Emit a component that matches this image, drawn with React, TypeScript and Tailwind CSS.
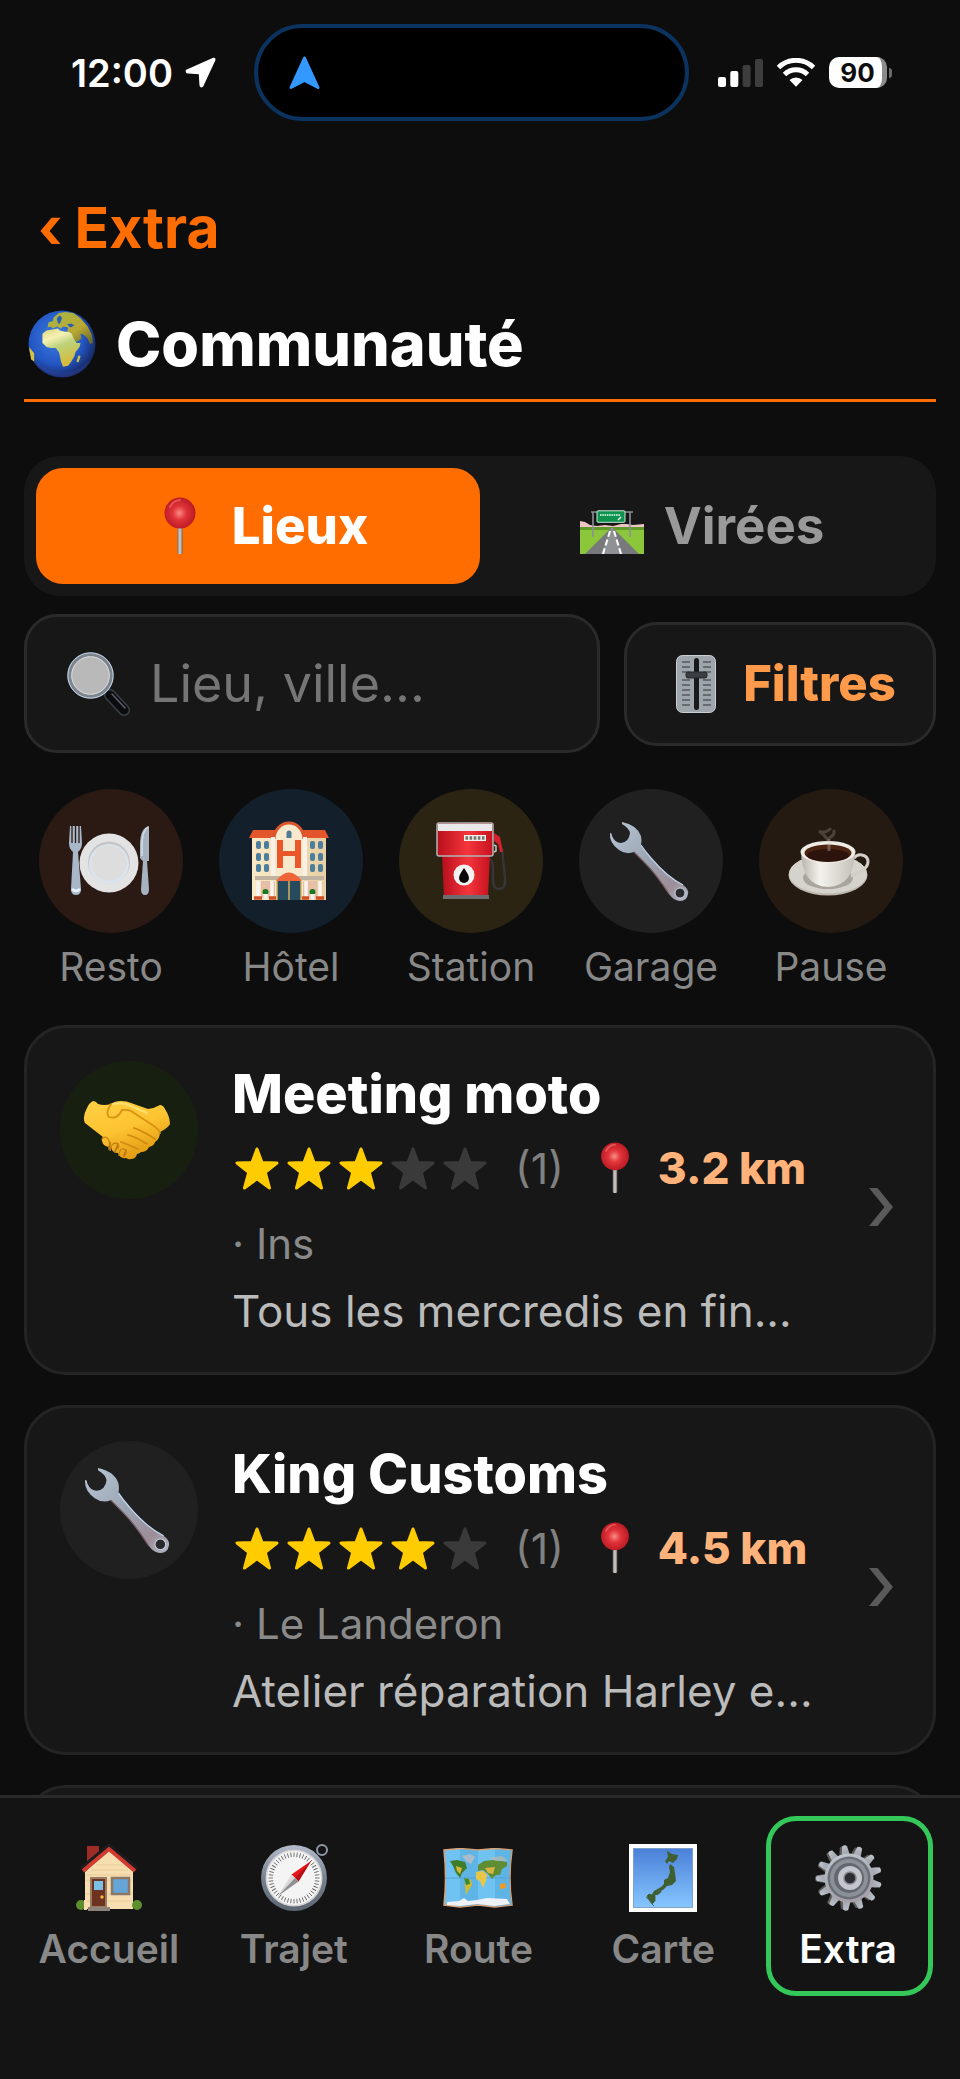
import type { ReactNode } from "react";

type IconProps = { className?: string };

function Defs() {
  return (
    <svg className="absolute size-0" aria-hidden="true">
      <defs>
        <radialGradient id="g-sea" cx="0.42" cy="0.4" r="0.62">
          <stop offset="0" stopColor="#3f7fe0" />
          <stop offset="0.65" stopColor="#2356c4" />
          <stop offset="1" stopColor="#16265f" />
        </radialGradient>
        <linearGradient id="g-land" x1="0" y1="0" x2="0.4" y2="1">
          <stop offset="0" stopColor="#d9d67a" />
          <stop offset="0.3" stopColor="#f6f1b4" />
          <stop offset="0.55" stopColor="#bcd27a" />
          <stop offset="1" stopColor="#d8bb3c" />
        </linearGradient>
        <linearGradient id="g-europe" x1="0" y1="0" x2="1" y2="1">
          <stop offset="0" stopColor="#a6b646" />
          <stop offset="0.6" stopColor="#b9a934" />
          <stop offset="1" stopColor="#5f6426" />
        </linearGradient>
        <radialGradient id="g-pin" cx="0.48" cy="0.5" r="0.55">
          <stop offset="0" stopColor="#f98b84" />
          <stop offset="0.4" stopColor="#e2343a" />
          <stop offset="1" stopColor="#b51722" />
        </radialGradient>
        <linearGradient id="g-needle" x1="0" y1="0" x2="1" y2="0">
          <stop offset="0" stopColor="#7d7876" />
          <stop offset="0.5" stopColor="#d9d5d2" />
          <stop offset="1" stopColor="#6f6a68" />
        </linearGradient>
        <linearGradient id="g-steel" x1="0" y1="0" x2="1" y2="1">
          <stop offset="0" stopColor="#b8c6d6" />
          <stop offset="0.5" stopColor="#9aa3b0" />
          <stop offset="0.8" stopColor="#9c8d97" />
          <stop offset="1" stopColor="#b3bccb" />
        </linearGradient>
        <linearGradient id="g-rim" x1="0" y1="0" x2="0" y2="1">
          <stop offset="0" stopColor="#b3bccb" />
          <stop offset="0.5" stopColor="#78818f" />
          <stop offset="1" stopColor="#5c6571" />
        </linearGradient>
        <linearGradient id="g-hand" x1="0" y1="0" x2="0.5" y2="1">
          <stop offset="0" stopColor="#ffd045" />
          <stop offset="0.55" stopColor="#fdc431" />
          <stop offset="1" stopColor="#e39c14" />
        </linearGradient>
        <linearGradient id="g-sky" x1="0" y1="0" x2="0" y2="1">
          <stop offset="0" stopColor="#4a80d8" />
          <stop offset="1" stopColor="#86c6ff" />
        </linearGradient>
        <linearGradient id="g-red" x1="0" y1="0" x2="1" y2="0">
          <stop offset="0" stopColor="#b80f1c" />
          <stop offset="0.55" stopColor="#f5353c" />
          <stop offset="1" stopColor="#c5121f" />
        </linearGradient>
        <linearGradient id="g-cup" x1="0" y1="0" x2="1" y2="0">
          <stop offset="0" stopColor="#b9b5ac" />
          <stop offset="0.35" stopColor="#f4f2ed" />
          <stop offset="1" stopColor="#c4c0b8" />
        </linearGradient>
        <linearGradient id="g-gear" x1="0" y1="0" x2="0.3" y2="1">
          <stop offset="0" stopColor="#c3cbd4" />
          <stop offset="0.6" stopColor="#a9adb5" />
          <stop offset="1" stopColor="#a79fab" />
        </linearGradient>
        <linearGradient id="g-wall" x1="0" y1="0" x2="1" y2="0">
          <stop offset="0" stopColor="#fbe9c6" />
          <stop offset="1" stopColor="#e8cfa4" />
        </linearGradient>
      </defs>
    </svg>
  );
}

function Svg({ box, className, children }: { box: string; className?: string; children: ReactNode }) {
  return (
    <svg viewBox={box} className={className} aria-hidden="true" fill="none">
      {children}
    </svg>
  );
}

function Globe({ className }: IconProps) {
  return (
    <Svg box="0 0 66 66" className={className}>
      <circle cx="33" cy="33" r="32.5" fill="url(#g-sea)" />
      <path d="M14 23l4-3 6-1 5-1 2 2 5 1 4 0 3 2 2 5 2 4 4 0-1 4-4 5-1 4-3 5-3 4-5 1-2-5-1-5-1-4-3-4-5 0-4-1-4-4 0-5z" fill="url(#g-land)" />
      <path d="M19 17l1-5 4-1 1-4 5-4 6-1 8 1 7 5 7 8 4 8 1 8-3 1-2-5-4-4-3-1 1 5-5 3-3-4-2-5-4-1 1-4-5-1-2 2-4-2-4 2-2-2-3 1z" fill="url(#g-europe)" />
      <path d="M28 8l3-3 2 3-2 5-2 0zM38 14l4-1 3 2-4 2z" fill="#2a5cb8" />
      <path d="M49 44l2 1-2 6-2-1zM1 36l5 6 0 8-3-2z" fill="#d3c140" />
      <path d="M6 46a30 30 0 0 0 56 0 34 34 0 0 1-56 0z" fill="#3a4fb0" opacity="0.25" />
    </Svg>
  );
}

function Pin({ className }: IconProps) {
  return (
    <Svg box="0 0 32 58" className={className}>
      <rect x="13.5" y="28" width="5" height="29" rx="1.5" fill="url(#g-needle)" />
      <circle cx="16" cy="16" r="15.5" fill="url(#g-pin)" />
      <path d="M6 10a12 12 0 0 1 10-7" stroke="#ef6a66" strokeWidth="2" strokeLinecap="round" opacity="0.7" />
    </Svg>
  );
}

function Road({ className }: IconProps) {
  return (
    <Svg box="0 0 64 44" className={className}>
      <path d="M0 11l5 1 5 3 7 1 8-1 8 1 8-2 6 0 6 1 11-1v6H0z" fill="#ecc5c4" />
      <rect y="17" width="64" height="27" fill="#8cc63a" />
      <rect y="17" width="64" height="3" fill="#5f9a2b" />
      <path d="M31 18h2l26 26H5z" fill="#77797c" />
      <path d="M31 18h2l10 26H21z" fill="#8f9194" />
      <path d="M30 21L23 44M34 21l7 23" stroke="#fff" strokeWidth="2" strokeDasharray="6 3" />
      <path d="M13 2v25M50 2v25M11 2h42" stroke="#8b9096" strokeWidth="1.6" />
      <rect x="17" y="0.8" width="28" height="11.5" rx="1" fill="#0e9250" stroke="#cfe8d8" strokeWidth="1" />
      <path d="M20 5h20" stroke="#bfe6cf" strokeWidth="2" strokeDasharray="1.5 0.8" />
      <path d="M38 10l3-3" stroke="#fff" strokeWidth="1.2" />
    </Svg>
  );
}

function Magnifier({ className }: IconProps) {
  return (
    <Svg box="0 0 64 64" className={className}>
      <path d="M38 38l6 6" stroke="#7f868d" strokeWidth="5" />
      <path d="M43 43l14 15" stroke="#3a4047" strokeWidth="12" strokeLinecap="round" />
      <path d="M43 43l14 15" stroke="#0b0c0f" strokeWidth="9" strokeLinecap="round" />
      <path d="M45 42l13 14" stroke="#5a6067" strokeWidth="1.6" strokeLinecap="round" />
      <circle cx="23.500" cy="23.500" r="21" fill="#b9b9b9" stroke="#7d858f" strokeWidth="4" />
      <circle cx="23.500" cy="23.500" r="22.700" stroke="#c9dcf0" strokeWidth="1" />
      <circle cx="23.500" cy="23.500" r="18.800" stroke="#dcdcdc" strokeWidth="1" />
    </Svg>
  );
}

function Fader({ className }: IconProps) {
  const marks = [7, 12, 17, 25, 30, 35, 40, 45, 50];
  return (
    <Svg box="0 0 40 58" className={className}>
      <rect x="0.5" y="0.5" width="39" height="57" rx="6" fill="#9fa6ab" stroke="#c9cfd3" />
      {marks.map((y) => (
        <path key={y} d={`M6 ${y}h8M27 ${y}h8`} stroke="#54595e" strokeWidth="1.500" />
      ))}
      <rect x="18" y="3" width="5" height="52" rx="2.500" fill="#17191b" />
      <rect x="10" y="17" width="21" height="6" rx="2" fill="#3b3f44" stroke="#24272a" />
    </Svg>
  );
}

function Plate({ className }: IconProps) {
  return (
    <Svg box="0 0 80 80" className={className}>
      <circle cx="40" cy="42" r="29.500" fill="#e3e3e4" />
      <circle cx="40" cy="41.500" r="21" fill="#c4c6ca" />
      <circle cx="40" cy="43" r="20" fill="#dbe3ec" />
      <circle cx="40" cy="42" r="17.500" fill="#dddddd" />
      <path d="M1 5l-1 17q0 6 4 9L2 68q0 6 5 6t5-6L9 31q4-3 4-9L12 5" fill="#a9b8c8" />
      <path d="M3 5v17M6.500 5v17M10 5v17" stroke="#2a1a14" strokeWidth="1.300" />
      <path d="M3 68q4 4 8 0" stroke="#e6f1fb" strokeWidth="3" />
      <path d="M80 5q-9 2-9 19v13q2 3 3 3l-2 28q0 6 4 6t4-6L78 40h2z" fill="#a6b3c0" />
      <path d="M79 6q-6 4-6 18v11" stroke="#d5dfe8" strokeWidth="1.500" />
    </Svg>
  );
}

function Hotel({ className }: IconProps) {
  const rows = [20, 32, 43];
  return (
    <Svg box="0 0 80 80" className={className}>
      <rect x="3" y="14" width="74" height="65" fill="url(#g-wall)" />
      <path d="M4 9h72l4 8H0z" fill="#e3562c" />
      <path d="M25 17a15 16 0 0 1 30 0v62H25z" fill="#f8e8cc" />
      <path d="M25 18a15 16 0 0 1 30 0" stroke="#db542c" strokeWidth="3" />
      <path d="M24 16v39M56 16v39" stroke="#f7f1ea" strokeWidth="4" />
      <path d="M28 19h6v11h12V19h6v28h-6V35H34v12h-6z" fill="#e9572b" />
      <path d="M37.500 17v-5a2.500 2.500 0 0 1 5 0v5z" fill="#4c7993" />
      {rows.map((y) => (
        <g key={y} fill="#4b7e9c">
          <rect x="7" y={y} width="5" height="8" rx="2" />
          <rect x="15" y={y} width="5" height="8" rx="2" />
          <rect x="61" y={y} width="5" height="8" rx="2" />
          <rect x="69" y={y} width="5" height="8" rx="2" />
        </g>
      ))}
      <rect x="6" y="55" width="69" height="4" fill="#c0b39f" />
      <rect x="12" y="60" width="14" height="17" fill="#e6bfa6" />
      <rect x="54" y="60" width="14" height="17" fill="#e6bfa6" />
      <path d="M9 60v17M23 60v17M57 60v17M71 60v17" stroke="#f8f4ef" strokeWidth="3.500" />
      <rect x="28" y="60" width="24" height="19" fill="#264a5e" />
      <path d="M28 60v19M40 60v19M52 60v19" stroke="#d4b25f" strokeWidth="1.500" />
      <path d="M27 60q13-17 26 0z" fill="#f0643a" />
      <path d="M5 77h8M20 77h7M53 77h7M67 77h8" stroke="#cf5024" strokeWidth="3.500" />
      <circle cx="16.500" cy="71" r="3" fill="#167a1f" />
      <circle cx="63.500" cy="71" r="3" fill="#167a1f" />
      <path d="M14 73h5l-1 6h-3zM61 73h5l-1 6h-3z" fill="#f2efe9" />
    </Svg>
  );
}

function Pump({ className }: IconProps) {
  return (
    <Svg box="0 0 80 80" className={className}>
      <path d="M60 38q4 1 4 10v11q0 9 6 9 7 0 6-11L73 27" stroke="#35353a" strokeWidth="2.500" />
      <path d="M65 12l6 4 3 15h-3l-2-8-4-3z" fill="#d3202c" />
      <path d="M65 24l2 1v5l-2 1" stroke="#c9c9cb" strokeWidth="1.500" />
      <path d="M13 33h48l-2 43H15z" fill="url(#g-red)" />
      <rect x="8" y="2" width="56" height="33" rx="2" fill="url(#g-red)" stroke="#b4b4b6" strokeWidth="1.500" />
      <path d="M9 3h54v7H9z" fill="#e9e9ea" />
      <rect x="35" y="14" width="22" height="6" fill="#f1efe9" />
      <path d="M36.500 17h19" stroke="#77736d" strokeWidth="3.500" strokeDasharray="2.600 1.500" />
      <rect x="14" y="74" width="46" height="4" fill="#6e6e70" />
      <circle cx="35" cy="54" r="10.500" fill="#f4f2f0" />
      <path d="M35 47q-5 7-5 10a5 5 0 0 0 10 0q0-3-5-10z" fill="#080808" />
    </Svg>
  );
}

function Wrench({ className }: IconProps) {
  return (
    <Svg box="0 0 80 80" className={className}>
      <path
        d="M13 1q15 3 19 14 1 5 0 9 4 6 10 13 16 19 32 27 6 4 5 9-1 7-8 7-6 0-11-7Q48 54 36 42l-11-11q-8 3-15-2Q0 22 1 12q2 0 2 3 3 7 9 7 8-1 9-10Q20 7 13 3z"
        fill="url(#g-steel)"
      />
      <path d="M32 24q4 6 10 13 16 19 32 27" stroke="#bfd5ee" strokeWidth="1.200" />
      <path d="M25 31l11 11q12 12 24 31" stroke="#7b5c66" strokeWidth="1.200" />
      <circle cx="71" cy="72" r="5" fill="#2a2a2d" stroke="#cdd7e3" strokeWidth="1" />
    </Svg>
  );
}

function Coffee({ className }: IconProps) {
  return (
    <Svg box="0 0 82 72" className={className}>
      <ellipse cx="40" cy="50" rx="39.500" ry="20.500" fill="#bcb8b0" />
      <ellipse cx="40" cy="49" rx="39" ry="19.500" fill="#d6d3cc" />
      <ellipse cx="40" cy="53" rx="25" ry="11" fill="#a9a59c" />
      <path d="M66 33q3-4 8-3 6 1 6 7-1 9-17 14" stroke="#d3cfc8" strokeWidth="3" />
      <path d="M13 25q0 36 27 37 27-1 27-37z" fill="url(#g-cup)" />
      <ellipse cx="40" cy="27" rx="27.500" ry="11" fill="#efece5" />
      <ellipse cx="40" cy="28" rx="23.500" ry="8.500" fill="#4a2410" />
      <ellipse cx="40" cy="30.500" rx="21" ry="6.500" fill="#2c130b" />
      <path d="M41 26V14" stroke="#cfc5bc" strokeWidth="3" opacity="0.350" />
      <path d="M40 15q-3-5-9-9 6 3 11-2M41 13q6-3 5-7" stroke="#9b9088" strokeWidth="3" strokeLinecap="round" opacity="0.350" />
    </Svg>
  );
}

function Handshake({ className }: IconProps) {
  return (
    <Svg box="0 0 88 60" className={className}>
      <path
        d="M10 1q3 0 5 3 6 2 13 0 4-3 10-3 6 0 10 2l17 6q7-1 12-4 3 0 5 4 5 8 5 15-2 4-10 8 0 7-5 10-1 4-6 5-2 5-8 5-2 2-4 2-1 5-6 5-2 1-5-1-6 1-8-5-6 0-7-6-8 0-9-6-1-3 1-4L2 23Q-1 17 4 8q2-5 6-7z"
        fill="url(#g-hand)"
      />
      <path d="M28 4q-6 9-2 13 8 3 13-7 8-1 12 3l20 13q6 5 6 7" stroke="#d99312" strokeWidth="1.800" strokeLinecap="round" />
      <path d="M51 28q9 3 21 11M45 35q8 2 19 9M38 42q8 3 17 7" stroke="#d08a10" strokeWidth="1.800" strokeLinecap="round" />
      <path d="M27 43l-1 6M35 44l-3 8M43 50l-2 6" stroke="#b9770f" strokeWidth="1.800" strokeLinecap="round" />
      <path d="M19 39q5-5 8 4M27 51q1-8 6-8 4 1 2 6M36 56q0-8 5-7 4 2 1 6" stroke="#c78310" strokeWidth="1.300" />
      <path d="M30 4q10-2 18 2l16 7" stroke="#ffdf70" strokeWidth="2" strokeLinecap="round" />
    </Svg>
  );
}

function House({ className }: IconProps) {
  return (
    <Svg box="0 0 68 68" className={className}>
      <rect x="12" y="2" width="12" height="20" fill="#9d2b26" />
      <path d="M34 4L10 28v37h48V27z" fill="#f6deb0" />
      <path d="M11 36h46M11 31h46M16 26h37M21 21h27M11 50h46M11 57h46" stroke="#e6c893" strokeWidth="0.800" />
      <path d="M6 24L34 1l28 23" stroke="#1c1c1e" strokeWidth="3" strokeLinejoin="round" />
      <path d="M8 27L34 5l26 22" stroke="#d13a2f" strokeWidth="4" />
      <rect x="16" y="34" width="15" height="29" fill="#6e3320" stroke="#9b7a62" strokeWidth="2" />
      <rect x="19" y="37" width="9" height="9" fill="#79bfe6" />
      <circle cx="27" cy="53" r="1.700" fill="#f3bd3c" />
      <rect x="37" y="34" width="17" height="16" fill="#66a5d8" stroke="#8b7866" strokeWidth="2.500" />
      <rect x="13" y="63" width="22" height="4" fill="#8c847b" />
      <circle cx="6" cy="61" r="5" fill="#5d8f2f" />
      <circle cx="62" cy="61" r="5" fill="#5d8f2f" />
      <rect x="9" y="56" width="3" height="10" fill="#f6deb0" />
    </Svg>
  );
}

function Compass({ className }: IconProps) {
  const ticks = Array.from({ length: 48 }, (_, i) => i * 7.5);
  return (
    <Svg box="0 0 68 68" className={className}>
      <circle cx="62" cy="6" r="5" stroke="#8d97a6" strokeWidth="2" />
      <circle cx="34" cy="34" r="33" fill="url(#g-rim)" />
      <circle cx="34" cy="34" r="28.500" fill="#d5d5d6" />
      <circle cx="34" cy="34" r="27" fill="#f4f4f4" />
      {ticks.map((a) => (
        <path key={a} d="M34 8.500v4.500" stroke="#6a6a6c" strokeWidth="0.900" transform={`rotate(${a} 34 34)`} />
      ))}
      <path d="M51 17L38.500 37.500 31.500 30.500z" fill="#e8151b" />
      <path d="M51 17L38.500 37.500 35 34z" fill="#b70f14" />
      <path d="M18 52L31.500 30.500 38.500 37.500z" fill="#d9d9da" />
      <path d="M18 52L35 34 38.500 37.500z" fill="#8f9192" />
    </Svg>
  );
}

function WorldMap({ className }: IconProps) {
  return (
    <Svg box="0 0 70 60" className={className}>
      <path d="M1 2l16-1.500 18 1.500 17-1.500L69 2q-4 28 0 55l-17 2-17-2-18 2L1 57q3-27 0-55z" fill="#6fc3f2" stroke="#d9a377" strokeWidth="1.500" />
      <path d="M17 1l18 1v55l-18 2zM52 1l17 1q-4 28 0 55l-17 2z" fill="#2f86c2" opacity="0.250" />
      <path d="M2 30h65" stroke="#4f9fce" strokeWidth="0.800" />
      <path d="M4 54l12-1 5-3 4 3 9-1 10-2 20 1 3 5-15 2-17-2-18 2-13-1z" fill="#eef2f6" />
      <path d="M7 13l7-1 8 2 2 6-5 5-2 5-4-5-3-7z" fill="#3f7d2a" />
      <path d="M13 18l6 2-2 6-3-3z" fill="#d8b63c" />
      <path d="M19 8l8-2 5 3-4 7-4-2z" fill="#a9bccb" />
      <path d="M22 30l6 2 1 5-4 6-2 4-1-9z" fill="#d2bb2c" />
      <path d="M21 30l5 1 1 5-4 1z" fill="#3f8a2c" />
      <path d="M33 24l7-1 4 4-1 6-3 7-3-7-4-2z" fill="#e8c648" />
      <path d="M35 17l6-4 10-1 13 2 0 4-5 3-2 6-4 0-4 4-4-5-5-4-5 1z" fill="#5f8d33" />
      <path d="M42 20l10-1-2 7-5-1z" fill="#d7b540" />
      <path d="M57 36l5-1 1 5-6 1z" fill="#f09a22" />
      <path d="M45 10l14-2 6 5-12 0z" fill="#b9bcae" opacity="0.700" />
    </Svg>
  );
}

function JapanMap({ className }: IconProps) {
  return (
    <Svg box="0 0 68 68" className={className}>
      <rect width="68" height="68" fill="#fdfdfd" />
      <rect x="4.500" y="4.500" width="59" height="59" fill="url(#g-sky)" stroke="#7095bd" strokeWidth="0.800" />
      <path d="M38 7l5 3 6 1-1 4-4 4-4-2-2 3-2-3 3-4z" fill="#3f5f33" />
      <path d="M41 20l4 3 1 6 1 8-4 4-5 1-4 4-5 1-3 5-4 0 3-5 7-4 3-3 0-4 4-2 2-6-1-5z" fill="#3f5f33" />
      <path d="M26 49l6-3 0 2-4 3zM20 50l6 2 0 5-3 3-3-4-2-4zM17 53l2 2M23 60l2 2" fill="#3f5f33" stroke="#3f5f33" strokeWidth="0.800" />
    </Svg>
  );
}

function Gear({ className }: IconProps) {
  const teeth = Array.from({ length: 13 }, (_, i) => i * (360 / 13) - 8);
  return (
    <Svg box="0 0 68 68" className={className}>
      {teeth.map((a) => (
        <path key={a} d="M28 14L30 3q3-2 6 0L38 14z" fill="#5d5a58" transform={`rotate(${a} 33 34)`} />
      ))}
      {teeth.map((a) => (
        <path key={a} d="M30.500 14L32.500 2q2.500-2 5 0L39.500 14z" fill="url(#g-gear)" transform={`rotate(${a} 35 34)`} />
      ))}
      <circle cx="35" cy="34" r="24.500" fill="url(#g-gear)" />
      <circle cx="35" cy="34" r="21.500" fill="#6b7078" />
      <circle cx="35" cy="34" r="19" fill="#8c9198" />
      <circle cx="35" cy="34" r="15" fill="#63676e" />
      <circle cx="36" cy="34" r="12" fill="#c3c6cc" />
      <circle cx="36" cy="34" r="6" fill="#2c2e31" stroke="#83878d" strokeWidth="1.500" />
    </Svg>
  );
}

function Star({ on }: { on: boolean }) {
  return (
    <svg viewBox="0 0 44 43" className="h-[43px] w-[44px]" aria-hidden="true">
      <path
        d="M22 2L27 15.500 42 16 30.300 25.300 34.500 41 22 31.800 9.500 41 13.700 25.300 2 16 17 15.500z"
        fill={on ? "#ffcc00" : "#3a3a3a"}
        stroke={on ? "#ffcc00" : "#3a3a3a"}
        strokeWidth="3"
        strokeLinejoin="round"
      />
    </svg>
  );
}

function StatusBar() {
  return (
    <div className="flex shrink-0 items-center pt-6 pr-[26px]">
      <div className="flex flex-1 items-center justify-end gap-3 pr-[38px]">
        <span className="text-[38px] leading-none font-semibold">12:00</span>
        <Svg box="0 0 31 31" className="size-[31px]">
          <path d="M28.500 1.500L1.500 13.500Q1 15.500 3 15.800L14.500 16.500 15.200 28Q15.700 30.500 17.500 29.200L29.700 3Q30 1 28.500 1.500z" fill="#fff" stroke="#fff" strokeWidth="1.500" strokeLinejoin="round" />
        </Svg>
      </div>
      <div className="flex h-[97px] w-[435px] items-center rounded-full border-4 border-[#0a335f] bg-black pl-[31px]">
        <Svg box="0 0 31 34" className="h-[34px] w-[31px]">
          <path d="M15.500 2L2 31.500 15.500 24.500 29 31.500z" fill="#3399ff" stroke="#3399ff" strokeWidth="3" strokeLinejoin="round" />
        </Svg>
      </div>
      <div className="flex flex-1 items-center gap-[13px] pl-[29px]">
        <Svg box="0 0 45 28" className="h-[28px] w-[45px]">
          <rect y="18" width="8" height="10" rx="2" fill="#fff" />
          <rect x="12.300" y="12" width="8" height="16" rx="2" fill="#fff" />
          <rect x="24.600" y="6" width="8" height="22" rx="2" fill="#3d3d3d" />
          <rect x="37" y="0" width="8" height="28" rx="2" fill="#3d3d3d" />
        </Svg>
        <Svg box="0 0 40 29" className="h-[29px] w-[40px]">
          <path d="M2.500 9.500a25 25 0 0 1 35 0" stroke="#fff" strokeWidth="5" />
          <path d="M8.500 16.500a16.500 16.500 0 0 1 23 0" stroke="#fff" strokeWidth="5" />
          <path d="M13.500 22a9.500 9.500 0 0 1 13 0L20 28.800z" fill="#fff" />
        </Svg>
        <div className="flex items-center gap-[2px]">
          <div className="flex h-[31px] w-[58px] items-center justify-center rounded-[10px] border-r-[5px] border-[#8a8a8a] bg-white pl-1 text-[26px] leading-none font-bold text-[#0d0d0d]">
            90
          </div>
          <div className="h-[10px] w-[3px] rounded-r-full bg-[#6a6a6a]" />
        </div>
      </div>
    </div>
  );
}

const categories = [
  { name: "Resto", tint: "bg-[#2b1a13]", icon: <Plate className="size-20" /> },
  { name: "Hôtel", tint: "bg-[#13202b]", icon: <Hotel className="size-20" /> },
  { name: "Station", tint: "bg-[#2b2413]", icon: <Pump className="size-20" /> },
  { name: "Garage", tint: "bg-[#202020]", icon: <Wrench className="size-20" /> },
  { name: "Pause", tint: "bg-[#241a11]", icon: <Coffee className="h-[72px] w-[82px]" /> },
];

const places = [
  {
    name: "Meeting moto",
    stars: 3,
    distance: "3.2 km",
    town: "Ins",
    text: "Tous les mercredis en fin...",
    tint: "bg-[#172010]",
    icon: <Handshake className="h-[60px] w-[88px]" />,
  },
  {
    name: "King Customs",
    stars: 4,
    distance: "4.5 km",
    town: "Le Landeron",
    text: "Atelier réparation Harley e...",
    tint: "bg-[#202020]",
    icon: <Wrench className="size-[86px]" />,
  },
];

const navItems = [
  { name: "Accueil", icon: <House className="size-[68px]" />, active: false },
  { name: "Trajet", icon: <Compass className="size-[68px]" />, active: false },
  { name: "Route", icon: <WorldMap className="h-[60px] w-[70px]" />, active: false },
  { name: "Carte", icon: <JapanMap className="size-[68px]" />, active: false },
  { name: "Extra", icon: <Gear className="size-[68px]" />, active: true },
];

function PlaceCard({ place }: { place: (typeof places)[number] }) {
  return (
    <a href="#" className="flex items-center rounded-[42px] border-[3px] border-[#242424] bg-[#171717] pt-[33px] pr-10 pb-7 pl-[33px]">
      <div className={`flex size-[138px] shrink-0 items-center justify-center self-start rounded-full pr-1 ${place.tint}`}>
        {place.icon}
      </div>
      <div className="ml-[34px] min-w-0 flex-1">
        <h2 className="text-[54px] leading-[66px] font-extrabold">{place.name}</h2>
        <div className="flex h-[82px] items-center pl-[3px]">
          <div className="flex gap-2">
            {[1, 2, 3, 4, 5].map((n) => (
              <Star key={n} on={n <= place.stars} />
            ))}
          </div>
          <span className="ml-7 text-[43px] leading-none text-[#808080]">(1)</span>
          <Pin className="ml-9 h-[52px] w-[30px]" />
          <span className="ml-7 text-[44px] leading-none font-extrabold whitespace-nowrap text-[#ffb27a]">{place.distance}</span>
        </div>
        <p className="text-[42px] leading-[69px] text-[#8a8a8a]">· {place.town}</p>
        <p className="truncate text-[44px] leading-[66px] text-[#bbbbbb]">{place.text}</p>
      </div>
      <Svg box="0 0 24 38" className="mt-2 h-[38px] w-[24px] shrink-0">
        <path d="M0 0h8.500L24 19 8.500 38H0L15.500 19z" fill="#5a5a5a" />
      </Svg>
    </a>
  );
}

export default function App() {
  return (
    <div className="flex h-screen flex-col overflow-hidden bg-[#0d0d0d] font-['Inter',sans-serif] text-white">
      <Defs />
      <StatusBar />
      <main className="min-h-0 flex-1 overflow-hidden px-6">
        <a href="#" className="mt-[72px] flex items-center gap-3 pl-[14px] text-[57px] leading-[70px] font-bold text-[#ff6d00]">
          <span>‹</span>
          <span>Extra</span>
        </a>
        <header className="mt-[36px] flex h-[103px] items-center gap-5 border-b-[3px] border-[#ff6d00] pb-[10px] pl-1">
          <Globe className="size-[68px]" />
          <h1 className="text-[61px] leading-[76px] font-extrabold">Communauté</h1>
        </header>

        <div role="tablist" className="mt-[54px] flex rounded-[36px] bg-[#171717] p-3">
          <button role="tab" aria-selected="true" className="flex h-[116px] flex-1 items-center justify-center gap-5 rounded-[27px] bg-[#ff6d00] text-[51px] font-extrabold">
            <span className="flex w-16 justify-center">
              <Pin className="h-[58px] w-[32px]" />
            </span>
            Lieux
          </button>
          <button role="tab" aria-selected="false" className="flex h-[116px] flex-1 items-center justify-center gap-5 rounded-[27px] text-[51px] font-bold text-[#999999]">
            <Road className="mt-3 h-[44px] w-[64px]" />
            Virées
          </button>
        </div>

        <div className="mt-[18px] flex items-center gap-6">
          <label className="flex h-[139px] min-w-0 flex-1 items-center gap-[19px] rounded-[33px] border-[3px] border-[#2a2a2a] bg-[#171717] px-10">
            <Magnifier className="size-16 shrink-0" />
            <input
              type="text"
              aria-label="Lieu, ville..."
              placeholder="Lieu, ville..."
              className="w-full min-w-0 bg-transparent text-[52px] leading-[66px] outline-none placeholder:text-[#757575]"
            />
          </label>
          <button className="flex h-[124px] w-[312px] items-center justify-center gap-[27px] rounded-[33px] border-[3px] border-[#2a2a2a] bg-[#171717] pl-3 text-[49px] font-extrabold text-[#ff9a4a]">
            <Fader className="h-[58px] w-[40px]" />
            Filtres
          </button>
        </div>

        <div className="mt-9 flex gap-9 px-[15px]">
          {categories.map((c) => (
            <button key={c.name} className="flex w-36 flex-col items-center gap-[10px]">
              <span className={`flex size-36 items-center justify-center rounded-full pr-1 ${c.tint}`}>{c.icon}</span>
              <span className="text-[39px] leading-[48px] text-[#888888]">{c.name}</span>
            </button>
          ))}
        </div>

        <div className="mt-[34px] flex flex-col gap-[30px]">
          {places.map((p) => (
            <PlaceCard key={p.name} place={p} />
          ))}
          <div className="h-24 rounded-[42px] border-[3px] border-[#242424] bg-[#171717]" />
        </div>
      </main>

      <nav className="flex shrink-0 gap-[18px] border-t-[3px] border-[#2a2a2a] bg-[#141414] px-[27px] pt-[18px] pb-[83px]">
        {navItems.map((item) => (
          <a
            key={item.name}
            href="#"
            className={`flex h-[180px] flex-1 flex-col items-center rounded-[30px] border-[5px] pt-[23px] pr-[3px] text-[39px] leading-[48px] font-semibold ${
              item.active ? "border-[#34c759] text-white" : "border-transparent text-[#888888]"
            }`}
          >
            <span className="mb-[13px] flex h-[68px] items-center">{item.icon}</span>
            {item.name}
          </a>
        ))}
      </nav>
    </div>
  );
}
